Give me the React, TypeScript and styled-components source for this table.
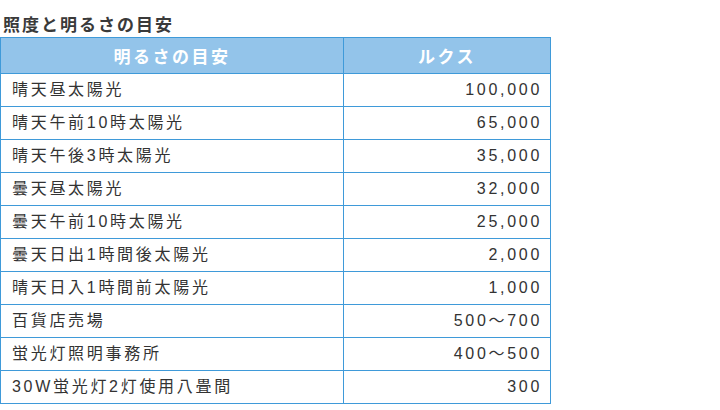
import React from "react";
import styled, { createGlobalStyle } from "styled-components";

const Global = createGlobalStyle`
  html, body { margin: 0; padding: 0; background: #ffffff; }
  body { font-family: "Liberation Sans", "Noto Sans CJK JP", sans-serif; color: #333333; }
`;

const Page = styled.div`
  width: 720px;
  height: 410px;
  overflow: hidden;
  padding-top: 14px;
  box-sizing: border-box;
`;

const Title = styled.h2`
  margin: 0 0 3px 3px;
  font-family: "Noto Sans CJK JP", sans-serif;
  font-size: 17px;
  line-height: 20px;
  font-weight: 700;
  letter-spacing: 2px;
  color: #3a3a3a;
`;

const Table = styled.table`
  width: 550px;
  border-collapse: collapse;
  table-layout: fixed;
  border: 1px solid #3f9ad9;
`;

const HeadCell = styled.th<{ $w: number }>`
  width: ${(p) => p.$w}px;
  height: 36px;
  padding: 0;
  background: #93c4ea;
  color: #ffffff;
  font-family: "Noto Sans CJK JP", sans-serif;
  font-size: 17px;
  font-weight: 700;
  letter-spacing: 2.5px;
  text-align: center;
  border: 1px solid #3f9ad9;
  box-sizing: border-box;
`;

const Cell = styled.td<{ $num?: boolean }>`
  height: 32px;
  padding: 0 ${(p) => (p.$num ? "8px" : "0")} 0 ${(p) => (p.$num ? "0" : "11px")};
  font-size: 16px;
  line-height: 20px;
  letter-spacing: 2.7px;
  color: #333333;
  text-align: ${(p) => (p.$num ? "right" : "left")};
  border: 1px solid #3f9ad9;
  white-space: nowrap;
`;

const rows: [string, string][] = [
  ["晴天昼太陽光", "100,000"],
  ["晴天午前10時太陽光", "65,000"],
  ["晴天午後3時太陽光", "35,000"],
  ["曇天昼太陽光", "32,000"],
  ["曇天午前10時太陽光", "25,000"],
  ["曇天日出1時間後太陽光", "2,000"],
  ["晴天日入1時間前太陽光", "1,000"],
  ["百貨店売場", "500〜700"],
  ["蛍光灯照明事務所", "400〜500"],
  ["30W蛍光灯2灯使用八畳間", "300"],
];

export default function App() {
  return (
    <>
      <Global />
      <Page>
        <Title>照度と明るさの目安</Title>
        <Table>
          <thead>
            <tr>
              <HeadCell $w={343}>明るさの目安</HeadCell>
              <HeadCell $w={207}>ルクス</HeadCell>
            </tr>
          </thead>
          <tbody>
            {rows.map(([name, lux]) => (
              <tr key={name}>
                <Cell>{name}</Cell>
                <Cell $num>{lux}</Cell>
              </tr>
            ))}
          </tbody>
        </Table>
      </Page>
    </>
  );
}
